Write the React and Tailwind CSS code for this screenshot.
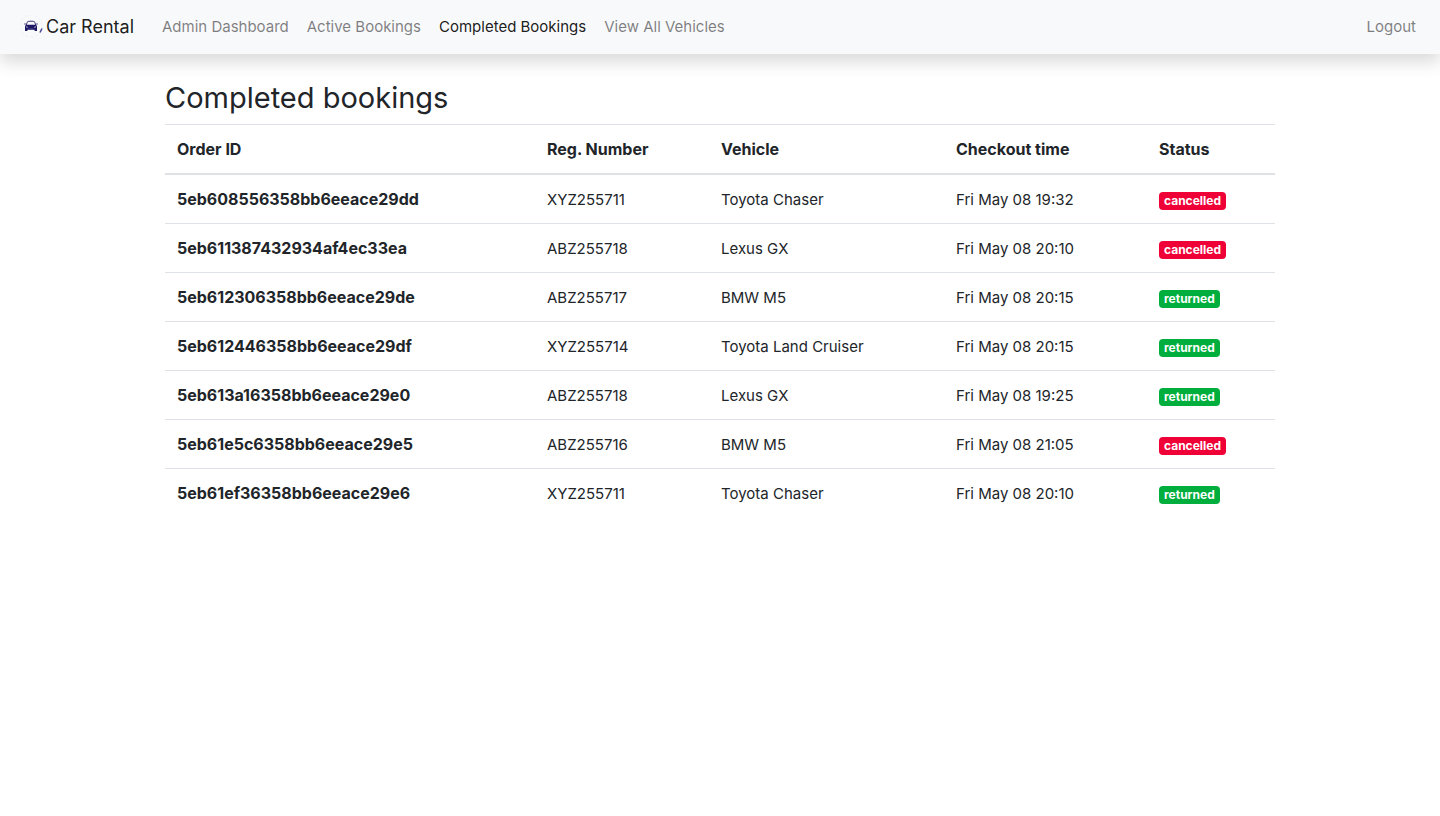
import React from 'react';

const links = [
  { label: 'Admin Dashboard' },
  { label: 'Active Bookings' },
  { label: 'Completed Bookings', active: true },
  { label: 'View All Vehicles' },
];

const bookings = [
  ['5eb608556358bb6eeace29dd', 'XYZ255711', 'Toyota Chaser', 'Fri May 08 19:32', 'cancelled'],
  ['5eb611387432934af4ec33ea', 'ABZ255718', 'Lexus GX', 'Fri May 08 20:10', 'cancelled'],
  ['5eb612306358bb6eeace29de', 'ABZ255717', 'BMW M5', 'Fri May 08 20:15', 'returned'],
  ['5eb612446358bb6eeace29df', 'XYZ255714', 'Toyota Land Cruiser', 'Fri May 08 20:15', 'returned'],
  ['5eb613a16358bb6eeace29e0', 'ABZ255718', 'Lexus GX', 'Fri May 08 19:25', 'returned'],
  ['5eb61e5c6358bb6eeace29e5', 'ABZ255716', 'BMW M5', 'Fri May 08 21:05', 'cancelled'],
  ['5eb61ef36358bb6eeace29e6', 'XYZ255711', 'Toyota Chaser', 'Fri May 08 20:10', 'returned'],
];

const statusColor = {
  cancelled: 'bg-[#ef0037]',
  returned: 'bg-[#00ae3d]',
};

function CarLogo() {
  return (
    <svg className="h-6 w-6 shrink-0" viewBox="0 0 24 24" aria-hidden="true">
      <circle cx="11" cy="11" r="11" fill="none" stroke="#f0f1f4" strokeWidth="1" strokeDasharray="3 2" />
      <path d="M6.200 10.200 7.300 7.100Q7.500 6.500 8.200 6.400 11 6 13.800 6.400q.7.1.9.7l1.100 3.100" fill="none" stroke="#3d397a" strokeWidth="1" />
      <path
        fill="#1d1765"
        d="M4.300 8.500h1.400v1H4.300ZM16.300 8.500h1.400v1h-1.400ZM6.300 9.800h9.400q1.300.6 1.300 2V16h-2.400v-1.300H7.400V16H5v-4.200q0-1.400 1.300-2Z"
      />
      <path d="M6 11.800l1.800.5M16 11.800l-1.800.5" stroke="#b9b7d0" strokeWidth="1" fill="none" />
      <path d="M8.500 13.600h5" stroke="#4d498a" strokeWidth=".6" fill="none" />
      <path d="M22 13.500 20 17.500" stroke="#4b4694" strokeWidth="1.500" fill="none" />
    </svg>
  );
}

export default function App() {
  return (
    <div className="min-h-screen bg-white font-['Inter',sans-serif] text-[#212529]">
      <nav className="flex h-[54px] items-center bg-[#f8f9fb] px-4 text-[15px] shadow-[0_8px_16px_rgba(0,0,0,0.15)]">
        <a href="#" className="mr-5 ml-1 flex items-center gap-0.5 text-[18px] leading-6 text-black/90">
          <CarLogo />
          Car Rental
        </a>
        <ul className="flex flex-1 items-center gap-0.5">
          {links.map(({ label, active }) => (
            <li key={label}>
              <a
                href="#"
                aria-current={active ? 'page' : undefined}
                className={active ? 'px-2 text-black/90' : 'px-2 text-black/50'}
              >
                {label}
              </a>
            </li>
          ))}
        </ul>
        <a href="#" className="px-2 text-black/50">Logout</a>
      </nav>

      <main className="mx-auto w-full max-w-[1140px] px-[15px] pt-6">
        <h1 className="pt-0.5 pb-2 text-[29px] leading-9">Completed bookings</h1>
        <table className="w-full table-fixed border-collapse text-left text-[15px] leading-6">
          <colgroup>
            <col className="w-[370px]" />
            <col className="w-[174px]" />
            <col className="w-[235px]" />
            <col className="w-[203px]" />
            <col />
          </colgroup>
          <thead>
            <tr className="border-t border-b-2 border-[#dee2e6]">
              {['Order ID', 'Reg. Number', 'Vehicle', 'Checkout time', 'Status'].map((heading) => (
                <th key={heading} scope="col" className="p-3 text-base font-bold">{heading}</th>
              ))}
            </tr>
          </thead>
          <tbody>
            {bookings.map(([id, registration, vehicle, time, status]) => (
              <tr key={id} className="border-t border-[#dee2e6]">
                <th scope="row" className="p-3 text-base font-bold">{id}</th>
                <td className="px-3 pt-[13px] pb-[11px]">{registration}</td>
                <td className="px-3 pt-[13px] pb-[11px]">{vehicle}</td>
                <td className="px-3 pt-[13px] pb-[11px]">{time}</td>
                <td className="px-3 pt-4 pb-3 leading-5">
                  <span className={`block w-fit rounded px-[5px] py-px text-xs leading-4 font-bold text-white ${statusColor[status]}`}>
                    {status}
                  </span>
                </td>
              </tr>
            ))}
          </tbody>
        </table>
      </main>
    </div>
  );
}
